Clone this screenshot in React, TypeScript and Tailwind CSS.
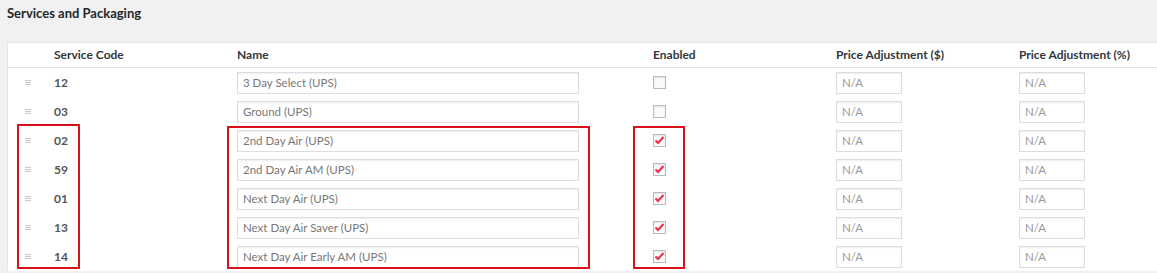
import React from "react";

type Service = { code: string; name: string; enabled: boolean };

const services: Service[] = [
  { code: "12", name: "3 Day Select (UPS)", enabled: false },
  { code: "03", name: "Ground (UPS)", enabled: false },
  { code: "02", name: "2nd Day Air (UPS)", enabled: true },
  { code: "59", name: "2nd Day Air AM (UPS)", enabled: true },
  { code: "01", name: "Next Day Air (UPS)", enabled: true },
  { code: "13", name: "Next Day Air Saver (UPS)", enabled: true },
  { code: "14", name: "Next Day Air Early AM (UPS)", enabled: true },
];

const cols = "grid grid-cols-[46px_183px_416px_183px_183px_1fr]";

function Handle() {
  return (
    <div className="flex w-[6px] flex-col gap-[1px]">
      <span className="h-[1px] w-[6px] bg-[#c8c8c8]" />
      <span className="h-[1px] w-[6px] bg-[#c8c8c8]" />
      <span className="h-[1px] w-[6px] bg-[#c8c8c8]" />
    </div>
  );
}

function Checkbox({ checked }: { checked: boolean }) {
  return (
    <div className="flex h-[13px] w-[13px] items-center justify-center border border-[#bbbbbb] bg-[#fbfbfb] shadow-[inset_0_1px_2px_rgba(0,0,0,0.1)]">
      {checked && (
        <svg width="11" height="11" viewBox="0 0 11 11">
          <path d="M1.5 5.5 L4 8 L9.5 2" fill="none" stroke="#ee2b47" strokeWidth="2" />
        </svg>
      )}
    </div>
  );
}

export default function App() {
  return (
    <div className="relative h-[273px] w-[1157px] overflow-hidden bg-[#f1f1f1] font-['Lato',sans-serif]">
      <h2 className="px-[7px] pt-[5px] text-[13px] font-bold leading-[16px] text-[#23282d]">
        Services and Packaging
      </h2>

      <div className="ml-[7px] mt-[21px] border-t border-l border-[#e5e5e5] bg-white">
        <div className={`${cols} h-[25px] items-center border-b border-[#e1e1e1] text-[12px] font-bold text-[#32373c]`}>
          <div />
          <div>Service Code</div>
          <div>Name</div>
          <div>Enabled</div>
          <div>Price Adjustment ($)</div>
          <div>Price Adjustment (%)</div>
        </div>

        {services.map((s) => (
          <div key={s.code} className={`${cols} h-[29px] items-center text-[12px]`}>
            <div className="pl-[17px]">
              <Handle />
            </div>
            <div className="font-bold text-[#555]">{s.code}</div>
            <div>
              <div className="flex h-[22px] w-[342px] items-center border border-[#ddd] px-[5px] text-[11.5px] text-[#777] shadow-[inset_0_1px_2px_rgba(0,0,0,0.07)]">
                {s.name}
              </div>
            </div>
            <div>
              <Checkbox checked={s.enabled} />
            </div>
            <div>
              <div className="flex h-[22px] w-[66px] items-center border border-[#ddd] px-[5px] text-[11.5px] text-[#999] shadow-[inset_0_1px_2px_rgba(0,0,0,0.07)]">
                N/A
              </div>
            </div>
            <div>
              <div className="flex h-[22px] w-[66px] items-center border border-[#ddd] px-[5px] text-[11.5px] text-[#999] shadow-[inset_0_1px_2px_rgba(0,0,0,0.07)]">
                N/A
              </div>
            </div>
          </div>
        ))}
      </div>

      {/* annotation boxes */}
      <div className="absolute left-[17px] top-[124px] h-[145px] w-[63px] border-2 border-[#d9111b]" />
      <div className="absolute left-[227px] top-[126px] h-[143px] w-[363px] border-2 border-[#d9111b]" />
      <div className="absolute left-[633px] top-[126px] h-[143px] w-[52px] border-2 border-[#d9111b]" />
    </div>
  );
}
